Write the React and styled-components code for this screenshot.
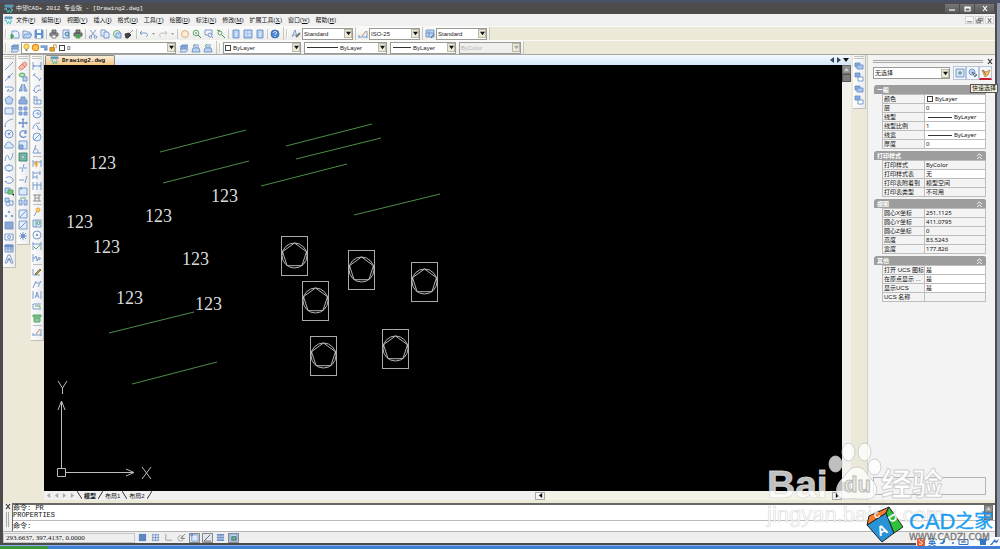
import React from 'react';
import styled, { createGlobalStyle } from 'styled-components';

const GlobalStyle = createGlobalStyle`
  * {
    box-sizing: border-box;
  }
  body {
    margin: 0;
    overflow: hidden;
  }
  body, button, input, select {
    font-family: 'Liberation Sans', 'Noto Sans CJK SC', sans-serif;
    font-size: 6px;
    line-height: 8px;
    color: #111;
  }
  button {
    padding: 0;
    border: 0;
    background: none;
  }
`;

const Desktop = styled.div`
  position: relative;
  display: flex;
  flex-direction: column;
  height: 100vh;
  border-top: 3px solid #4a5064;
  background: #8c94ac;
`;

const Frame = styled.div`
  flex: 1;
  min-height: 0;
  display: flex;
  flex-direction: column;
  margin-right: 3px;
  border: solid #4c4a4a;
  border-width: 0 2px 2px 3px;
  background: #ece9d8;
`;

const TitleBar = styled.header`
  display: flex;
  align-items: center;
  height: 11px;
  padding-left: 1px;
  background: #4e4b4b;
  color: #f2f2f2;
  font-family: 'Liberation Mono', 'Noto Sans CJK SC', monospace;
`;

const Title = styled.h1`
  flex: 1;
  margin: 0;
  padding-left: 2px;
  font-size: 6px;
  font-weight: 400;
  white-space: pre;
`;

const WindowButton = styled.button`
  display: flex;
  align-items: center;
  justify-content: center;
  width: ${props => props.$wide ? '19px' : '14px'};
  height: 9px;
  margin-right: 1px;
  background: linear-gradient(#777, #5a5858);
`;

const MenuBar = styled.nav`
  display: flex;
  align-items: center;
  height: 12px;
  padding-left: 1px;
  background: #f0f0f0;
  font-family: 'Liberation Serif', 'Noto Sans CJK SC', serif;
`;

const MenuList = styled.div`
  display: flex;
  flex: 1;
`;

const MenuItem = styled.button`
  padding: 0 3px;
  font-family: inherit;
  white-space: nowrap;
`;

const ChildButton = styled.button`
  display: flex;
  align-items: center;
  justify-content: center;
  width: 9px;
  height: 8px;
  margin-right: 1px;
  border: 1px solid #d4d4d4;
  background: #fafafa;
`;

const ToolRow = styled.div`
  display: flex;
  height: 14px;
  border-top: 1px solid #fbfaf5;
`;

const ToolGroup = styled.div`
  display: flex;
  align-items: center;
  height: 13px;
  padding: 0 2px 0 1px;
  border-right: 1px solid #c9c6b8;
  background: linear-gradient(#fafafa, #ededeb);
`;

const Grip = styled.div`
  width: 2px;
  height: 9px;
  margin: 0 2px 0 1px;
  border-left: 1px solid #cbcac4;
  background: #fff;
`;

const ToolButton = styled.button`
  display: flex;
  align-items: center;
  justify-content: center;
  width: 12px;
  height: 12px;
`;

const MoreButton = styled(ToolButton)`
  width: 7px;
`;

const Divider = styled.span`
  width: 1px;
  height: 10px;
  margin: 0 1px;
  background: #c6c6c6;
`;

const ComboBox = styled.label`
  position: relative;
  display: flex;
  align-items: center;
  width: ${props => props.$width}px;
  height: 12px;
  margin-right: ${props => props.$after || 0}px;
  border: 1px solid #9a9a96;
  background: ${props => props.$disabled ? '#efefec' : '#fff'};
`;

const ComboPrefix = styled.span`
  display: flex;
  align-items: center;
  flex: none;
`;

const ComboSelect = styled.select`
  flex: 1;
  min-width: 0;
  height: 10px;
  padding: 0 0 0 ${props => props.$flush ? '0' : '1px'};
  border: 0;
  appearance: none;
  background: transparent;
  opacity: 1;
  color: ${props => props.disabled ? '#b4b4b0' : '#222'};
`;

const ComboArrow = styled.span`
  display: flex;
  align-items: center;
  justify-content: center;
  flex: none;
  width: 8px;
  height: 9px;
  border: 1px solid #bdb9a8;
  background: #ece9d8;
`;

const Workspace = styled.div`
  flex: 1;
  min-height: 0;
  display: flex;
  border-top: 1px solid #aaa99f;
`;

const PaletteDock = styled.aside`
  display: flex;
  align-items: flex-start;
  gap: 1px;
  width: 41px;
  flex: none;
`;

const Palette = styled.div`
  display: flex;
  flex-direction: column;
  align-items: center;
  width: 13px;
  height: ${props => props.$height}px;
  padding-bottom: 2px;
  border-right: 1px solid #c2c0b6;
  border-bottom: 1px solid #c2c0b6;
  background: linear-gradient(90deg, #fdfdfd, #ebecef);
`;

const PaletteGrip = styled.div`
  flex: none;
  width: 10px;
  height: 3px;
  margin: 1px 0;
  border: solid #c4c4c0;
  border-width: 1px 0;
`;

const PaletteButton = styled.button`
  display: flex;
  align-items: center;
  flex: 1;
  min-height: 0;
`;

const PaletteDivider = styled.span`
  flex: none;
  width: 9px;
  height: 1px;
  margin: 1px 0;
  background: #bdbdbd;
`;

const DocumentArea = styled.main`
  flex: 1;
  min-width: 0;
  display: flex;
  flex-direction: column;
  margin-right: 2px;
`;

const DocumentTabs = styled.div`
  display: flex;
  justify-content: space-between;
  height: 10px;
  background: linear-gradient(#f4f9ff, #d5e5fb);
`;

const DocumentTab = styled.button`
  display: flex;
  align-items: center;
  gap: 3px;
  width: 70px;
  margin-left: 1px;
  padding-left: 4px;
  border: 1px solid #8f8a84;
  border-bottom: 0;
  border-radius: 2px 2px 0 0;
  background: linear-gradient(#fdeed8, #f5c583);
  font-family: 'Liberation Mono', monospace;
  font-weight: 700;
`;

const TabArrows = styled.div`
  display: flex;
  align-items: center;
  gap: 1px;
  padding-right: 2px;
`;

const CanvasRow = styled.div`
  flex: 1;
  min-height: 0;
  display: flex;
`;

const Canvas = styled.div`
  flex: 1;
  min-width: 0;
  background: #000;

  svg {
    display: block;
    width: 100%;
    height: 100%;
  }
`;

const VerticalScroll = styled.div`
  display: flex;
  flex-direction: column;
  justify-content: space-between;
  width: 9px;
  background: #f1f1ee;
`;

const ScrollButton = styled.button`
  display: flex;
  align-items: center;
  justify-content: center;
  width: ${props => props.$plain ? '10px' : '9px'};
  height: ${props => props.$plain ? '8px' : '9px'};
  border: 1px solid ${props => props.$plain ? '#aaa' : '#6e6e6e'};
  background: ${props => props.$plain ? '#f4f3ee' : '#8d8d8d'};
`;

const ScrollThumb = styled.div`
  width: 9px;
  height: 8px;
  border: 1px solid #555;
  background: #7c7c7c;
`;

const LayoutBar = styled.div`
  display: flex;
  align-items: center;
  height: 9px;
  background: #f0f0f0;
`;

const LayoutNav = styled.div`
  display: flex;
  justify-content: space-between;
  width: 33px;
  padding: 0 2px;
`;

const LayoutTabs = styled.div`
  display: flex;
  align-items: center;
  flex: 1;
`;

const LayoutTab = styled.button`
  padding: 0 2px;
  font-weight: ${props => props.$active ? 700 : 400};
  white-space: nowrap;
`;

const ScrollTrack = styled.div`
  display: flex;
  flex: 0 0 38%;
  justify-content: space-between;
  margin-right: 9px;
  background: #f4f4e6;
`;

const OrderDock = styled.aside`
  width: 14px;
  flex: none;
`;

const Properties = styled.aside`
  position: relative;
  display: flex;
  flex-direction: column;
  flex: none;
  width: 128px;
  padding: 3px 9px 5px 5px;
  border-left: 1px solid #d0d0cc;
  background: #f3f3f3;
`;

const PanelHead = styled.div`
  display: flex;
  align-items: center;
  gap: 3px;
  height: 6px;
  margin: 0 -8px 2px 0;
`;

const PanelGrip = styled.div`
  flex: 1;
  height: 3px;
  border: solid #a9a9a9;
  border-width: 1px 0;
`;

const Selection = styled.div`
  display: flex;
  align-items: center;
  height: 14px;
  margin: 0 -6px 5px 0;
`;

const SelectionButton = styled.button`
  display: flex;
  align-items: center;
  justify-content: center;
  width: 13px;
  height: 14px;
  border: 1px solid #b9c5d5;
  border-bottom: ${props => props.$marked ? '2px solid #c8202c' : '1px solid #b9c5d5'};
  background: #f2f7fd;
`;

const Tip = styled.div`
  position: absolute;
  top: 29px;
  right: -3px;
  z-index: 2;
  height: 9px;
  padding: 0 1px;
  border: 1px solid #555;
  background: #f6f4dc;
  line-height: 7px;
  white-space: nowrap;
`;

const Section = styled.section`
  margin: 0 0 2px 1px;
`;

const SectionTitle = styled.h2`
  display: flex;
  align-items: center;
  justify-content: space-between;
  height: 9px;
  margin: 0;
  padding: 0 4px 0 3px;
  border-radius: 3px 2px 0 0;
  background: #9d9d9d;
  color: #fff;
  font-size: 6px;
  font-weight: 700;
`;

const PropertyTable = styled.table`
  width: calc(100% - 8px);
  margin-left: 8px;
  border-collapse: collapse;
  table-layout: fixed;
`;

const PropertyName = styled.th`
  width: 42px;
  height: 9px;
  padding: 0 0 0 1px;
  border: 1px solid #bdbdbd;
  background: #f3f3f3;
  font-weight: 400;
  text-align: left;
  white-space: nowrap;
  overflow: hidden;
`;

const PropertyCell = styled.td`
  height: 9px;
  padding: 0;
  border: 1px solid #bdbdbd;
  background: ${props => props.$locked ? '#f3f3f3' : '#fff'};
`;

const CellContent = styled.div`
  display: flex;
  align-items: center;
  height: 8px;
  padding-left: 1px;
`;

const PropertyInput = styled.input`
  flex: 1;
  min-width: 0;
  height: 8px;
  padding: 0;
  border: 0;
  background: transparent;
  font-family: 'Noto Sans', 'Noto Sans CJK SC', sans-serif;
`;

const Swatch = styled.span`
  width: 6px;
  height: 6px;
  margin: 0 2px 0 1px;
  border: 1px solid #444;
  background: #fff;
`;

const LineSample = styled.span`
  width: ${props => props.$width}px;
  height: 1px;
  margin: 0 2px;
  background: #333;
`;

const Description = styled.div`
  height: 18px;
  margin-top: auto;
  border: 1px solid #b5b5b5;
`;

const CommandPanel = styled.section`
  display: flex;
  flex: none;
  height: 31px;
  padding-top: 3px;
`;

const CommandGrip = styled.div`
  display: flex;
  flex-direction: column;
  align-items: center;
  gap: 2px;
  width: 9px;
  background: #f0f0f0;
`;

const GripLines = styled.div`
  width: 3px;
  height: 15px;
  border: solid #aaa;
  border-width: 0 1px;
`;

const CommandBody = styled.div`
  flex: 1;
  border: solid #686864;
  border-width: 2px 0 0 1px;
  background: #fff;
  font-family: 'Liberation Mono', 'Noto Sans CJK SC', monospace;
  font-size: 7px;
`;

const CommandLog = styled.div`
  display: flex;
  justify-content: space-between;
  height: 16px;
  padding-right: 2px;
  border-bottom: 1px solid #bbb;
`;

const CommandScroll = styled.div`
  display: flex;
  flex-direction: column;
  height: 15px;

  button {
    height: 8px;
  }
`;

const CommandLines = styled.pre`
  margin: 0;
  font-family: inherit;
  line-height: 7px;
`;

const CommandLine = styled.label`
  display: flex;
  align-items: center;
  height: 10px;
`;

const CommandInput = styled.input`
  flex: 1;
  padding: 0;
  height: 9px;
  border: 0;
  outline: 0;
`;

const StatusBar = styled.footer`
  display: flex;
  align-items: center;
  flex: none;
  height: 12px;
  border-top: 1px solid #b4b4b4;
  background: #eee;
`;

const Coordinates = styled.output`
  width: 132px;
  height: 10px;
  margin-right: 2px;
  padding-left: 2px;
  border: 1px solid #c5c5c5;
  font-family: 'Liberation Serif', serif;
  font-size: 7px;
`;

const StatusButton = styled.button`
  display: flex;
  align-items: center;
  justify-content: center;
  width: 11px;
  height: 10px;
  margin-right: 2px;
  border: 1px solid ${props => props.$on ? '#8a8a8a' : 'transparent'};
  background: ${props => props.$on ? '#e0e6f0' : 'transparent'};
`;

const Taskbar = styled.div`
  flex: none;
  height: 4px;
  border-top: 1px solid #86b0ee;
  background: linear-gradient(90deg, #3f9440 0 48px, #3f7fd8 48px);
`;

const Watermark = styled.svg`
  position: absolute;
  right: 0;
  bottom: 0;
  z-index: 3;
  pointer-events: none;
`;

const BLUE = '#6d92c8';
const PALE = '#bcd4f2';
const GREEN = '#4aa35a';
const GOLD = '#eba32c';

const shapes = {
  app: <><path d="M1 1h8v2H1z" fill="#3fa7a4" /><path d="M2 4l2 5 1-3 2 3 1-4" stroke="#3fb8b0" /><path d="M0 5h3M6 3l3 4" stroke="#6dc7e8" /></>,
  fresh: <><path d="M2 2h5l2 2v5H2z" fill="#e8f1ff" /><path d="M1 5l3 2-3 3z" fill={GREEN} stroke={GREEN} /></>,
  open: <><path d="M1 8V2h3l1 1h3v2" fill="#dce9fa" /><path d="M1 9l2-4h7L8 9z" fill={PALE} /></>,
  save: <><path d="M1 1h8v8H1z" fill="#5b94dc" /><path d="M3 1h4v3H3zM3 6h4v3H3z" fill="#fff" stroke="none" /></>,
  print: <><path d="M3 1h4v3H3zM1 4h8v3H1z" fill="#8c8f96" stroke="#666" /><path d="M3 6h4v3H3z" fill="#fff" stroke="#777" /></>,
  preview: <><path d="M2 1h6v8H2z" fill="#e9f2ff" /><circle cx="6" cy="5" r="2" fill="#a9d6e6" stroke="#3b6d93" /><path d="M7 7l2 2" /></>,
  publish: <><path d="M3 1h4v3H3zM1 4h8v3H1z" fill="#78847c" stroke="#555" /><path d="M3 6h4v3H3z" fill={GREEN} stroke={GREEN} /></>,
  cut: <><path d="M2 1l5 6M8 1L3 7" /><circle cx="2.5" cy="8" r="1.3" /><circle cx="7.5" cy="8" r="1.3" /></>,
  copy: <><path d="M1 1h4l1 1v5H1z" fill="#eef5ff" /><path d="M4 3h4l1 1v5H4z" fill="#dfeaff" /></>,
  paste: <><circle cx="5" cy="5" r="3.5" stroke={GREEN} /><path d="M4 4h5v5H4z" fill={PALE} /></>,
  brush: <><path d="M1 5l4-1 2 2-3 3H2z" fill="#444" stroke="#333" /><path d="M6 4l3-3" stroke="#a77" /></>,
  undo: <path d="M1 4l2-2M1 4l2 2M1 4h5c3 0 3 3 1 4" />,
  redo: <path d="M9 4L7 2M9 4L7 6M9 4H4C1 4 1 7 3 8" stroke="#bbb" />,
  arrowDown: <path d="M3 4h4L5 6z" fill="#777" stroke="none" />,
  pan: <><circle cx="5" cy="5" r="3.5" fill="#fbe7cf" stroke="#e2a868" /><path d="M3 5h4" stroke="#fff" /></>,
  zoomIn: <><circle cx="4" cy="4" r="2.8" stroke={GREEN} /><path d="M6 6l3 3M3 4h2" stroke="#555" /></>,
  zoomBox: <><path d="M1 1h7v5H1z" /><circle cx="6" cy="6" r="2" fill="#dceaff" /><path d="M8 8l1 1" stroke="#b76b28" /></>,
  zoomBack: <><circle cx="4" cy="4" r="2" stroke={GREEN} /><path d="M6 6l3 3M1 1l3 1" stroke="#3a7d44" /></>,
  sheet: <><path d="M2 1h6v8H2z" fill="#a8c6ee" /><path d="M4 3h2M4 5h3M4 7h2" stroke="#fff" /></>,
  list: <><path d="M1 1h8v8H1z" fill="#a8c6ee" /><path d="M2 3h2M5 3h3M2 6h2M5 6h3" stroke="#fff" /></>,
  help: <><circle cx="5" cy="5" r="4" fill="#4f86d6" stroke="#3b68ac" /><path d="M3.5 4c0-2 3-2 3 0 0 1-1.500 1-1.500 2M5 7v1" stroke="#fff" /></>,
  textStyle: <><path d="M1 8L4 1l2 7M2 6h3" /><path d="M5 8l4-4" stroke="#777" strokeWidth="2" /></>,
  dimStyle: <><path d="M1 8h8M1 6v3M9 2v7" /><path d="M4 7l4-5" stroke="#c87432" /></>,
  tableStyle: <><path d="M1 1h8v7H1z" fill={PALE} /><path d="M1 4h8M4 2v6" /><path d="M6 9l3-4" stroke="#555" /></>,
  layers: <><path d="M1 4l2-2h6L7 4z" fill="#78a2dd" /><path d="M1 6l2-2h6L7 6z" fill="#a5c2ea" /><path d="M1 9l2-3h6L7 9z" fill="#d5e4f8" /></>,
  layerPrev: <><path d="M1 9l1-4h6l1 4z" fill={PALE} /><path d="M2 4h6M3 2h5" /><path d="M2 3l2-2" stroke={GREEN} /></>,
  bulb: <><circle cx="5" cy="4" r="3" fill="#ffd95a" stroke="#d59f25" /><path d="M4 8h2" stroke="#777" strokeWidth="2" /></>,
  sun: <circle cx="5" cy="5" r="3.5" fill="#ffc44a" stroke="#d98a20" strokeWidth="1.3" />,
  freeze: <><path d="M1 3h7v2H1z" fill="#88b2e8" /><path d="M5 6h3v2H5z" fill="#6a96d2" /></>,
  lock: <><path d="M1 5h5v4H1z" fill={GOLD} stroke="#b97818" /><path d="M5 5V2h3v4" stroke="#c98422" /></>,
  line: <path d="M1 9l8-8" />,
  xline: <><path d="M1 9l8-8" /><circle cx="5" cy="5" r="1" fill={BLUE} /></>,
  pline: <path d="M1 4h6c3 0 3 4 0 4H3M3 8l2-2" />,
  polygon: <path d="M5 1l4 3-1.500 5h-5L1 4z" fill={PALE} />,
  rect: <path d="M1 2h8v6H1z" fill="#dce9fb" />,
  arc: <path d="M1 9C1 4 4 2 9 1M1 9l1-1" />,
  circle: <><circle cx="5" cy="5" r="4" fill="#e4efff" /><circle cx="5" cy="5" r=".8" fill={BLUE} /><path d="M5 5l2-2" /></>,
  cloud: <path d="M2 8C0 8 0 5 2 5c0-4 5-4 5-1 3 0 3 4 1 4z" fill="#dceafc" />,
  spline: <path d="M1 9c1-7 3-7 4-3s3 1 4-5" />,
  ellipse: <><ellipse cx="5" cy="5" rx="4" ry="3" fill="#e7f1ff" /><path d="M5 1v2M5 7v2" /></>,
  ellipseArc: <path d="M2 3c3-3 8 0 7 3s-7 3-8 0M1 6l2 1" />,
  block: <><path d="M1 2h5v5H1z" fill={PALE} /><path d="M4 4h5v4H4z" fill="#7dbf83" stroke={GREEN} /><path d="M8 8h2v2z" fill="#111" stroke="none" /></>,
  makeBlock: <><path d="M1 1h4v4H1z" fill={PALE} /><path d="M4 4h5v4H4z" /><circle cx="4" cy="7" r="2" fill="#e4efff" /></>,
  points: <><circle cx="5" cy="3" r=".8" fill={BLUE} /><circle cx="2" cy="7" r=".8" fill={BLUE} /><circle cx="8" cy="7" r=".8" fill={BLUE} /></>,
  hatch: <path d="M1 2h8v7H1z" fill="#8aa8d2" />,
  region: <><path d="M1 2h8v6H1z" /><circle cx="5" cy="5" r="1.5" /></>,
  table: <><path d="M1 2h8v7H1zM1 6h8M4 4v5M7 4v5" fill="#dce9fb" /><path d="M1 2h8v2H1z" fill={BLUE} /></>,
  letter: <path d="M1 9l3-8h2l3 8H7L5 4 3 9zM3 6h4" />,
  erase: <path d="M1 6l4-4c2-2 5 0 3 3L5 8C3 10 0 8 1 6zM4 3l3 3" fill="#f6b9ab" stroke="#d27862" />,
  duplicate: <><ellipse cx="4" cy="3" rx="3" ry="2" stroke={GREEN} fill="#b8e0b8" /><path d="M5 5h4v4H5z" fill={PALE} /></>,
  mirror: <path d="M4 1v7H1zM6 1v7h3z" fill="#9fbbe4" />,
  offset: <path d="M3 2h4v3h2v4H1V5h2z" fill="#8facd8" />,
  array: <path d="M1 1h3v3H1zM6 1h3v3H6zM1 6h3v3H1zM6 6h3v3H6z" fill="#8fb0e0" />,
  move: <path d="M5 1v8M1 5h8M4 2l1-1 1 1M4 8l1 1 1-1M2 4L1 5l1 1M8 4l1 1-1 1" strokeWidth="1.3" />,
  rotate: <path d="M8 3C5 0 1 3 2 6s5 3 6 1M8 1v3H6" strokeWidth="1.3" />,
  scale: <><path d="M1 1h8v8H1z" fill="#dce9fb" /><path d="M1 5h4v4H1z" fill="#8aacd9" /></>,
  stretch: <><path d="M1 1h8v8H1z" fill="#75b996" stroke="#3b7c76" /><path d="M3 4h4L5 7z" fill="#fff" /></>,
  trim: <path d="M1 5h3M6 5h3M4 9l2-8" />,
  extend: <path d="M1 6h5M7 9l2-7" />,
  breakLine: <><path d="M1 2h8v7H1z" fill="#dce9fb" /><path d="M3 1v3" stroke={GREEN} /></>,
  join: <><path d="M1 3h3v5H1zM6 3h3v5H6z" fill={PALE} /><path d="M2 1h6" stroke={GREEN} /></>,
  chamfer: <path d="M1 1h8v8H1zM2 8l6-6" fill="#e3eefd" />,
  explode: <><circle cx="5" cy="5" r="1.5" fill={BLUE} /><path d="M5 1v8M1 5h8M2 2l6 6M8 2L2 8" /></>,
  dimLinear: <path d="M1 1v8M9 1v8M1 5h8M2 4v2M8 4v2" />,
  dimAligned: <path d="M2 3l6 5M1 4l2-3M7 9l2-3" />,
  dimArc: <path d="M2 7c0-4 3-6 6-5M1 6l3 3c1-2 2-3 5-3" />,
  ordinate: <path d="M2 1v8h7V5H5V2H2M2 5h3v4" />,
  radius: <><circle cx="5" cy="5" r="4" fill="#e7f1ff" /><path d="M5 5h3M5 5l1-2" /></>,
  jogged: <path d="M1 8c0-5 4-6 7-6M4 4l2 2v2l3 1" />,
  diameter: <><circle cx="5" cy="5" r="4" fill="#e7f1ff" /><path d="M2 8l6-6" /></>,
  angle: <path d="M4 1L1 9h8M3 5c3 0 3 2 3 4" />,
  quick: <><path d="M1 2v7M9 2v7M1 4h8" /><path d="M5 3L3 6h2L4 9" stroke={GOLD} strokeWidth="1.5" /></>,
  baseline: <path d="M1 1v8M1 3h7M1 7h4M8 1v4M5 5v4" />,
  continued: <path d="M1 1v8M5 1v8M9 1v8M1 4h8" />,
  space: <path d="M1 2h8M1 8h8M3 2v6M7 2v6M3 5h4" stroke="#87817b" />,
  leader: <><path d="M2 9l3-5" /><circle cx="6" cy="3" r="2" fill="#f9cd6d" stroke={GOLD} /></>,
  tolerance: <><path d="M1 2h8v7H1zM4 2v7" fill="#d9e9f5" /><circle cx="6.5" cy="5" r="1.5" stroke={GREEN} /></>,
  center: <><circle cx="5" cy="5" r="4" /><path d="M5 4v2M4 5h2" strokeWidth="1.3" /></>,
  inspect: <><path d="M1 1v8M9 1v8M1 3h8" /><path d="M2 6l2 2 4-4" stroke={GREEN} /></>,
  wave: <path d="M1 1v8M1 5h2l1-2 1 5 2-4v3l2-2" />,
  edit: <><path d="M1 2v6h7" /><path d="M3 7l5-5 1 1-5 5z" fill={GOLD} stroke="#6c6c4b" /></>,
  oblique: <path d="M1 9l3-7M6 8l3-6M3 4h5" />,
  dimText: <path d="M1 1v8M9 1v8M3 8l2-6 2 6M4 6h2" />,
  override: <><path d="M1 3h8M1 8h8M1 3v5" /><path d="M3 5h5v2" stroke={GREEN} /></>,
  refresh: <path d="M1 2h8v2H1zM2 5h6v4H2z" fill="#8ec79b" stroke={GREEN} />,
  front: <><path d="M1 2h5v4H1z" fill="#84a9e0" /><path d="M3 4h6v4H3z" fill="#a8c6ef" /></>,
  back: <><path d="M1 1h5v4H1z" fill="#84a9e0" /><path d="M4 5h5v4H4z" fill="#fff" /></>,
  plus: <><path d="M1 1h8v8H1z" fill="#d3e6ee" /><path d="M3 5h4M5 3v4" stroke="#437c92" /></>,
  pick: <><circle cx="4" cy="4" r="3" fill={PALE} /><path d="M4 4l5 3-2 1v1z" fill="#fff" stroke="#456" /></>,
  filter: <><path d="M1 2l4 2 4-2-2 5-3 2z" fill="#f6c45e" stroke="#c88a28" /><path d="M2 2l3 5" stroke="#668" /></>,
  snap: <path d="M1 1h8v8H1z" fill="#5c86c2" strokeWidth="0" />,
  grid: <path d="M1 2h8M1 5h8M1 8h8M2 1v8M5 1v8M8 1v8" />,
  ortho: <path d="M2 1v7h7" stroke="#8f8f96" />,
  polar: <><circle cx="4" cy="6" r="3" stroke="#999" /><path d="M4 6l5-5M4 6h5" stroke="#777" /></>,
  osnap: <><path d="M2 2h7v7H2z" fill="#dce9fb" /><path d="M1 1h2v2H1z" fill={BLUE} /></>,
  otrack: <path d="M1 9l7-7M1 9h8" stroke="#555" />,
  weight: <path d="M1 2h8M1 5h8M1 8h8" strokeWidth="2" />,
  model: <><path d="M1 1h8v8H1z" fill={PALE} /><path d="M3 4h5v4H3z" fill="#69a683" stroke="#447d80" /></>,
};

function Icon({ name, size = 10 }) {
  return (
    <svg width={size} height={size} viewBox="0 0 10 10" fill="none" stroke={BLUE} strokeWidth=".9" aria-hidden="true">
      {shapes[name]}
    </svg>
  );
}

function Triangle({ dir = 'down', color = '#111', size = 6 }) {
  const points = { down: '0,1 6,1 3,5', up: '0,5 6,5 3,1', left: '5,0 5,6 1,3', right: '1,0 1,6 5,3' };
  return (
    <svg width={size} height={size} viewBox="0 0 6 6" aria-hidden="true">
      <polygon points={points[dir]} fill={color} />
    </svg>
  );
}

function Mark({ kind, color = '#fff' }) {
  const paths = {
    min: 'M1 5h6',
    max: 'M2 2h5v4H2zM2 3h5',
    restore: 'M3 1h4v3H3zM1 3h4v3H1z',
    close: 'M2 1l4 5M6 1L2 6',
  };
  return (
    <svg width="8" height="7" viewBox="0 0 8 7" fill="none" stroke={color} strokeWidth="1.2" aria-hidden="true">
      <path d={paths[kind]} />
    </svg>
  );
}

function Combo({ label, value, width, after, prefix, disabled }) {
  return (
    <ComboBox $width={width} $after={after} $disabled={disabled}>
      {prefix && <ComboPrefix>{prefix}</ComboPrefix>}
      <ComboSelect aria-label={label} disabled={disabled} $flush={Boolean(prefix)}>
        <option>{value}</option>
      </ComboSelect>
      <ComboArrow><Triangle size={5} color={disabled ? '#aaa' : '#111'} /></ComboArrow>
    </ComboBox>
  );
}

const menus = [
  ['文件', 'F'], ['编辑', 'E'], ['视图', 'V'], ['插入', 'I'], ['格式', 'O'], ['工具', 'T'],
  ['绘图', 'D'], ['标注', 'N'], ['修改', 'M'], ['扩展工具', 'X'], ['窗口', 'W'], ['帮助', 'H'],
];

const standardTools = [
  ['fresh', 'open', 'save'],
  ['print', 'preview', 'publish'],
  ['cut', 'copy', 'paste', 'brush'],
  ['undo', 'arrowDown', 'redo', 'arrowDown'],
  ['pan', 'zoomIn', 'zoomBox', 'zoomBack'],
  ['sheet', 'list', 'sheet'],
  ['help'],
];

const drawTools = [
  ['line', 'xline', 'pline', 'polygon', 'rect', 'arc', 'circle', 'cloud', 'spline', 'ellipse',
    'ellipseArc', 'block', 'makeBlock', 'points', 'hatch', 'region', 'table', 'letter'],
];

const modifyTools = [
  ['erase', 'duplicate', 'mirror', 'offset', 'array', 'move', 'rotate', 'scale', 'stretch', 'trim',
    'extend', 'breakLine', 'join', 'chamfer', 'chamfer', 'explode'],
];

const dimensionTools = [
  ['dimLinear', 'dimAligned', 'dimArc', 'ordinate'],
  ['radius', 'jogged', 'diameter', 'angle'],
  ['quick', 'baseline', 'continued', 'space'],
  ['leader', 'tolerance', 'center', 'inspect', 'wave'],
  ['edit', 'oblique', 'dimText', 'override', 'refresh'],
  ['dimStyle'],
];

const sections = [
  {
    title: '一般',
    rows: [
      { name: '颜色', value: 'ByLayer', swatch: true },
      { name: '层', value: '0' },
      { name: '线型', value: 'ByLayer', line: true },
      { name: '线型比例', value: '1' },
      { name: '线宽', value: 'ByLayer', line: true },
      { name: '厚度', value: '0' },
    ],
  },
  {
    title: '打印样式',
    rows: [
      { name: '打印样式', value: 'ByColor', locked: true },
      { name: '打印样式表', value: '无' },
      { name: '打印表附着到', value: '模型空间', locked: true },
      { name: '打印表类型', value: '不可用', locked: true },
    ],
  },
  {
    title: '视图',
    rows: [
      { name: '圆心X坐标', value: '251.1125', locked: true },
      { name: '圆心Y坐标', value: '411.0795', locked: true },
      { name: '圆心Z坐标', value: '0', locked: true },
      { name: '高度', value: '83.5243', locked: true },
      { name: '宽度', value: '177.826', locked: true },
    ],
  },
  {
    title: '其他',
    rows: [
      { name: '打开 UCS 图标', value: '是' },
      { name: '在原点显示 ...', value: '是' },
      { name: '显示UCS', value: '是' },
      { name: 'UCS 名称', value: '', locked: true },
    ],
  },
];

const labels = [[45, 104], [167, 137], [101, 157], [22, 163], [49, 188], [138, 200], [72, 239], [151, 245]];

const greenLines = [
  [116, 87, 202, 65], [119, 118, 205, 96], [242, 81, 328, 59], [252, 94, 337, 73],
  [217, 121, 303, 99], [310, 150, 396, 129], [65, 268, 150, 247], [88, 319, 173, 297],
];

const parts = [[237, 171], [304, 185], [367, 197], [258, 216], [266, 271], [338, 264]];

function Drawing() {
  return (
    <svg fill="none" stroke="#c9c9c9">
      <g stroke="#4b8f48">
        {greenLines.map(([x1, y1, x2, y2]) => (
          <line key={`${x1}-${y1}`} x1={x1} y1={y1} x2={x2} y2={y2} />
        ))}
      </g>
      <g fill="#dcdcdc" stroke="none" fontFamily="Liberation Serif, serif" fontSize="18">
        {labels.map(([x, y]) => <text key={`${x}-${y}`} x={x} y={y}>123</text>)}
      </g>
      {parts.map(([x, y]) => (
        <g key={`${x}-${y}`} transform={`translate(${x} ${y})`}>
          <rect x=".5" y=".5" width="26" height="39" stroke="#aaa" />
          <circle cx="13.5" cy="19.5" r="12.5" strokeWidth=".9" />
          <path d="M13.500 7l12 8.700-4.600 14h-14.800L1.500 15.700z" strokeWidth=".9" />
        </g>
      ))}
      <g stroke="#bdbdbd">
        <path d="M13.500 403.500h8v8h-8zM17.500 403V336M22 407.500h67" />
        <path d="M14 345l3.500-9 3.500 9M82 404l8 3.500-8 3.500" />
        <path d="M14 316l4.500 7 4.500-7M18.500 323v6M98 402l9 12M107 402l-9 12" />
      </g>
    </svg>
  );
}

function ToolPalette({ groups, height }) {
  return (
    <Palette $height={height}>
      <PaletteGrip />
      {groups.map((group, index) => (
        <React.Fragment key={group[0]}>
          {index > 0 && <PaletteDivider />}
          {group.map((name, i) => (
            <PaletteButton key={`${name}${i}`} aria-label={name}><Icon name={name} /></PaletteButton>
          ))}
        </React.Fragment>
      ))}
    </Palette>
  );
}

function PropertySection({ title, rows, collapsible }) {
  return (
    <Section>
      <SectionTitle>
        {title}
        {collapsible && (
          <svg width="5" height="6" viewBox="0 0 5 6" fill="none" stroke="#fff" strokeWidth=".9">
            <path d="M0 3l2.500-2L5 3M0 6l2.500-2L5 6" />
          </svg>
        )}
      </SectionTitle>
      <PropertyTable>
        <tbody>
          {rows.map(row => (
            <tr key={row.name}>
              <PropertyName scope="row">{row.name}</PropertyName>
              <PropertyCell $locked={row.locked}>
                <CellContent>
                  {row.swatch && <Swatch />}
                  {row.line && <LineSample $width={24} />}
                  <PropertyInput aria-label={row.name} defaultValue={row.value} readOnly={row.locked} />
                </CellContent>
              </PropertyCell>
            </tr>
          ))}
        </tbody>
      </PropertyTable>
    </Section>
  );
}

function Branding() {
  return (
    <Watermark width="240" height="112" viewBox="760 437 240 112">
      <g fill="#fff" fillOpacity=".75" stroke="#c4c4c4" strokeOpacity=".8" fontFamily="Liberation Sans, Noto Sans CJK SC, sans-serif">
        <text x="767" y="498" fontSize="39" fontWeight="700" stroke="#ddd">Bai</text>
        <ellipse cx="835.5" cy="464" rx="6.5" ry="8" />
        <ellipse cx="848.5" cy="452" rx="6.5" ry="9" />
        <ellipse cx="864.5" cy="452" rx="6.5" ry="9" />
        <ellipse cx="874.5" cy="467" rx="6.5" ry="8" />
        <path d="M857 467c8 0 9 7 14 12 9 8 7 19-3 20-7 1-15-1-22 0-11 0-12-11-5-19 6-6 8-13 16-13z" />
        <text x="844" y="492" fontSize="22" fontWeight="700" fill="#e4e2d8" stroke="#aaa">du</text>
        <text x="881" y="495" fontSize="31" fontWeight="700" fillOpacity="1">经验</text>
        <text x="767" y="522" fontSize="22" strokeWidth=".7" stroke="#d4d4d4">jingyan.baidu.com</text>
      </g>
      <rect x="916" y="537" width="84" height="9" fill="#f7fafc" />
      <g fontFamily="Noto Sans CJK SC, sans-serif" fontWeight="700" fill="#2f76c4">
        <rect x="917" y="538" width="8" height="8" rx="1" fill="#e8552d" />
        <path d="M923 540c-4-2-5 1-2 2s1 3-2 2" fill="none" stroke="#fff" />
        <text x="928" y="545" fontSize="8">英</text>
        <path d="M944 538c-1 4-2 5-5 5 4 3 8-1 5-5z" />
        <circle cx="953" cy="543" r="1" />
        <path d="M959 539.500h9v5h-9zM961 542h5" fill="none" stroke="#2f76c4" />
        <path d="M980 538l3 1 3-1 2 2-2 1v4h-6v-4l-2-1zM990 545l5-6 1 2 3-2-2 4-3-1-2 3z" />
      </g>
      <g stroke="#222" strokeLinejoin="round">
        <path d="M867 525l19-12 8 20-12 9z" fill="#2a93d6" />
        <path d="M867 525l2-9 20-9-3 6z" fill="#f47c2a" />
        <path d="M889 507l14 20-9 6-8-20z" fill="#2fc03c" />
      </g>
      <g fill="#fff" fontFamily="Liberation Sans, sans-serif" fontWeight="700">
        <text x="-5" y="5" fontSize="14" transform="translate(882 530) rotate(-24)">A</text>
        <text x="-4" y="4" fontSize="11" transform="translate(893 518) rotate(58)">D</text>
        <text x="-3" y="3" fontSize="8" transform="translate(877 515) rotate(-28)">C</text>
      </g>
      <g fill="#1b9df0" stroke="#1b9df0" strokeWidth=".3" fontFamily="Liberation Sans, Noto Sans CJK SC, sans-serif">
        <text x="909" y="529" fontSize="22">CAD</text>
        <text x="955" y="528" fontSize="19">之家</text>
      </g>
      <text x="909" y="540" fontSize="9" fill="#777" stroke="#777" strokeWidth=".3" fontFamily="DejaVu Sans, sans-serif">WWW.CADZJ.COM</text>
    </Watermark>
  );
}

function App() {
  return (
    <Desktop>
      <GlobalStyle />
      <Frame>
        <TitleBar>
          <Icon name="app" />
          <Title>中望CAD+ 2012 专业版 - [Drawing2.dwg]</Title>
          <WindowButton aria-label="最小化"><Mark kind="min" /></WindowButton>
          <WindowButton aria-label="最大化"><Mark kind="max" /></WindowButton>
          <WindowButton $wide aria-label="关闭"><Mark kind="close" /></WindowButton>
        </TitleBar>

        <MenuBar>
          <Icon name="app" size={9} />
          <MenuList>
            {menus.map(([name, key]) => (
              <MenuItem key={key}>{name}(<u>{key}</u>)</MenuItem>
            ))}
          </MenuList>
          <ChildButton aria-label="最小化"><Mark kind="min" color="#777" /></ChildButton>
          <ChildButton aria-label="还原"><Mark kind="restore" color="#777" /></ChildButton>
          <ChildButton aria-label="关闭"><Mark kind="close" color="#777" /></ChildButton>
        </MenuBar>

        <ToolRow>
          <ToolGroup>
            <Grip />
            {standardTools.map((group, index) => (
              <React.Fragment key={index}>
                {index > 0 && <Divider />}
                {group.map((name, i) => {
                  const Button = name === 'arrowDown' ? MoreButton : ToolButton;
                  return <Button key={i} aria-label={name}><Icon name={name} /></Button>;
                })}
              </React.Fragment>
            ))}
          </ToolGroup>
          <ToolGroup>
            <Grip />
            <ToolButton aria-label="文字样式"><Icon name="textStyle" /></ToolButton>
            <Combo label="文字样式" value="Standard" width={51} />
          </ToolGroup>
          <ToolGroup>
            <ToolButton aria-label="标注样式"><Icon name="dimStyle" /></ToolButton>
            <Combo label="标注样式" value="ISO-25" width={51} />
          </ToolGroup>
          <ToolGroup>
            <ToolButton aria-label="表格样式"><Icon name="tableStyle" /></ToolButton>
            <Combo label="表格样式" value="Standard" width={51} />
          </ToolGroup>
        </ToolRow>

        <ToolRow>
          <ToolGroup>
            <Grip />
            <ToolButton aria-label="图层特性"><Icon name="layers" /></ToolButton>
            <Combo
              label="图层"
              value="0"
              width={155}
              after={2}
              prefix={(
                <>
                  <Icon name="bulb" size={9} />
                  <Icon name="sun" size={9} />
                  <Icon name="freeze" size={9} />
                  <Icon name="lock" size={9} />
                  <Swatch />
                </>
              )}
            />
            <ToolButton aria-label="置为当前"><Icon name="layers" /></ToolButton>
            <ToolButton aria-label="上一个图层"><Icon name="layerPrev" /></ToolButton>
            <ToolButton aria-label="图层状态"><Icon name="layerPrev" /></ToolButton>
          </ToolGroup>
          <ToolGroup>
            <Grip />
            <Combo label="颜色" value="ByLayer" width={78} after={3} prefix={<Swatch />} />
            <Combo label="线型" value="ByLayer" width={83} after={3} prefix={<LineSample $width={31} />} />
            <Combo label="线宽" value="ByLayer" width={66} after={3} prefix={<LineSample $width={18} />} />
            <Combo label="打印样式" value="ByColor" width={62} disabled />
          </ToolGroup>
        </ToolRow>

        <Workspace>
          <PaletteDock>
            <ToolPalette groups={drawTools} height={213} />
            <ToolPalette groups={modifyTools} height={190} />
            <ToolPalette groups={dimensionTools} height={286} />
          </PaletteDock>

          <DocumentArea>
            <DocumentTabs>
              <DocumentTab><Icon name="app" size={9} />Drawing2.dwg</DocumentTab>
              <TabArrows>
                <Triangle dir="left" color="#345" size={6} />
                <Triangle dir="right" color="#345" size={6} />
                <Triangle size={6} />
              </TabArrows>
            </DocumentTabs>
            <CanvasRow>
              <Canvas><Drawing /></Canvas>
              <VerticalScroll>
                <div>
                  <ScrollButton aria-label="向上"><Triangle dir="up" color="#ccc" size={5} /></ScrollButton>
                  <ScrollThumb />
                </div>
                <ScrollButton aria-label="向下"><Triangle color="#ccc" size={5} /></ScrollButton>
              </VerticalScroll>
            </CanvasRow>
            <LayoutBar>
              <LayoutNav>
                <Triangle dir="left" color="#aaa" size={5} />
                <Triangle dir="left" color="#aaa" size={5} />
                <Triangle dir="right" color="#aaa" size={5} />
                <Triangle dir="right" color="#aaa" size={5} />
              </LayoutNav>
              <svg width="5" height="9"><path d="M0 0l5 8" stroke="#333" /></svg>
              <LayoutTabs>
                <LayoutTab $active>模型</LayoutTab>
                <svg width="5" height="9"><path d="M5 0L0 8" stroke="#333" /></svg>
                <LayoutTab>布局1</LayoutTab>
                <svg width="5" height="9"><path d="M0 0l5 8" stroke="#333" /></svg>
                <LayoutTab>布局2</LayoutTab>
                <svg width="5" height="9"><path d="M5 0L0 8" stroke="#333" /></svg>
              </LayoutTabs>
              <ScrollTrack>
                <ScrollButton $plain aria-label="向左"><Triangle dir="left" size={5} /></ScrollButton>
                <ScrollButton $plain aria-label="向右"><Triangle dir="right" size={5} /></ScrollButton>
              </ScrollTrack>
            </LayoutBar>
          </DocumentArea>

          <OrderDock>
            <Palette $height={54}>
              <PaletteGrip />
              {['front', 'back', 'front', 'back'].map((name, i) => (
                <PaletteButton key={i} aria-label={name}><Icon name={name} /></PaletteButton>
              ))}
            </Palette>
          </OrderDock>

          <Properties>
            <PanelHead>
              <PanelGrip />
              <Mark kind="close" color="#333" />
            </PanelHead>
            <Selection>
              <Combo label="选择" value="无选择" width={78} after={3} />
              <SelectionButton aria-label="切换"><Icon name="plus" /></SelectionButton>
              <SelectionButton aria-label="选择对象"><Icon name="pick" /></SelectionButton>
              <SelectionButton $marked aria-label="快速选择"><Icon name="filter" /></SelectionButton>
            </Selection>
            <Tip role="tooltip">快速选择</Tip>
            {sections.map((section, index) => (
              <PropertySection key={section.title} {...section} collapsible={index > 0} />
            ))}
            <Description />
          </Properties>
        </Workspace>

        <CommandPanel>
          <CommandGrip>
            <Mark kind="close" color="#333" />
            <GripLines />
          </CommandGrip>
          <CommandBody>
            <CommandLog>
              <CommandLines>{'命令: PR\nPROPERTIES'}</CommandLines>
              <CommandScroll>
                <ScrollButton aria-label="向上"><Triangle dir="up" color="#ccc" size={5} /></ScrollButton>
                <ScrollButton aria-label="向下"><Triangle color="#ccc" size={5} /></ScrollButton>
              </CommandScroll>
            </CommandLog>
            <CommandLine>
              命令:
              <CommandInput />
            </CommandLine>
          </CommandBody>
        </CommandPanel>

        <StatusBar>
          <Coordinates>293.6637, 397.4137, 0.0000</Coordinates>
          {['snap', 'grid', 'ortho', 'polar', 'osnap', 'otrack', 'weight', 'model'].map(name => (
            <StatusButton key={name} $on={['osnap', 'otrack', 'model'].includes(name)} aria-label={name}>
              <Icon name={name} size={9} />
            </StatusButton>
          ))}
        </StatusBar>
      </Frame>
      <Taskbar />
      <Branding />
    </Desktop>
  );
}

export default App;
